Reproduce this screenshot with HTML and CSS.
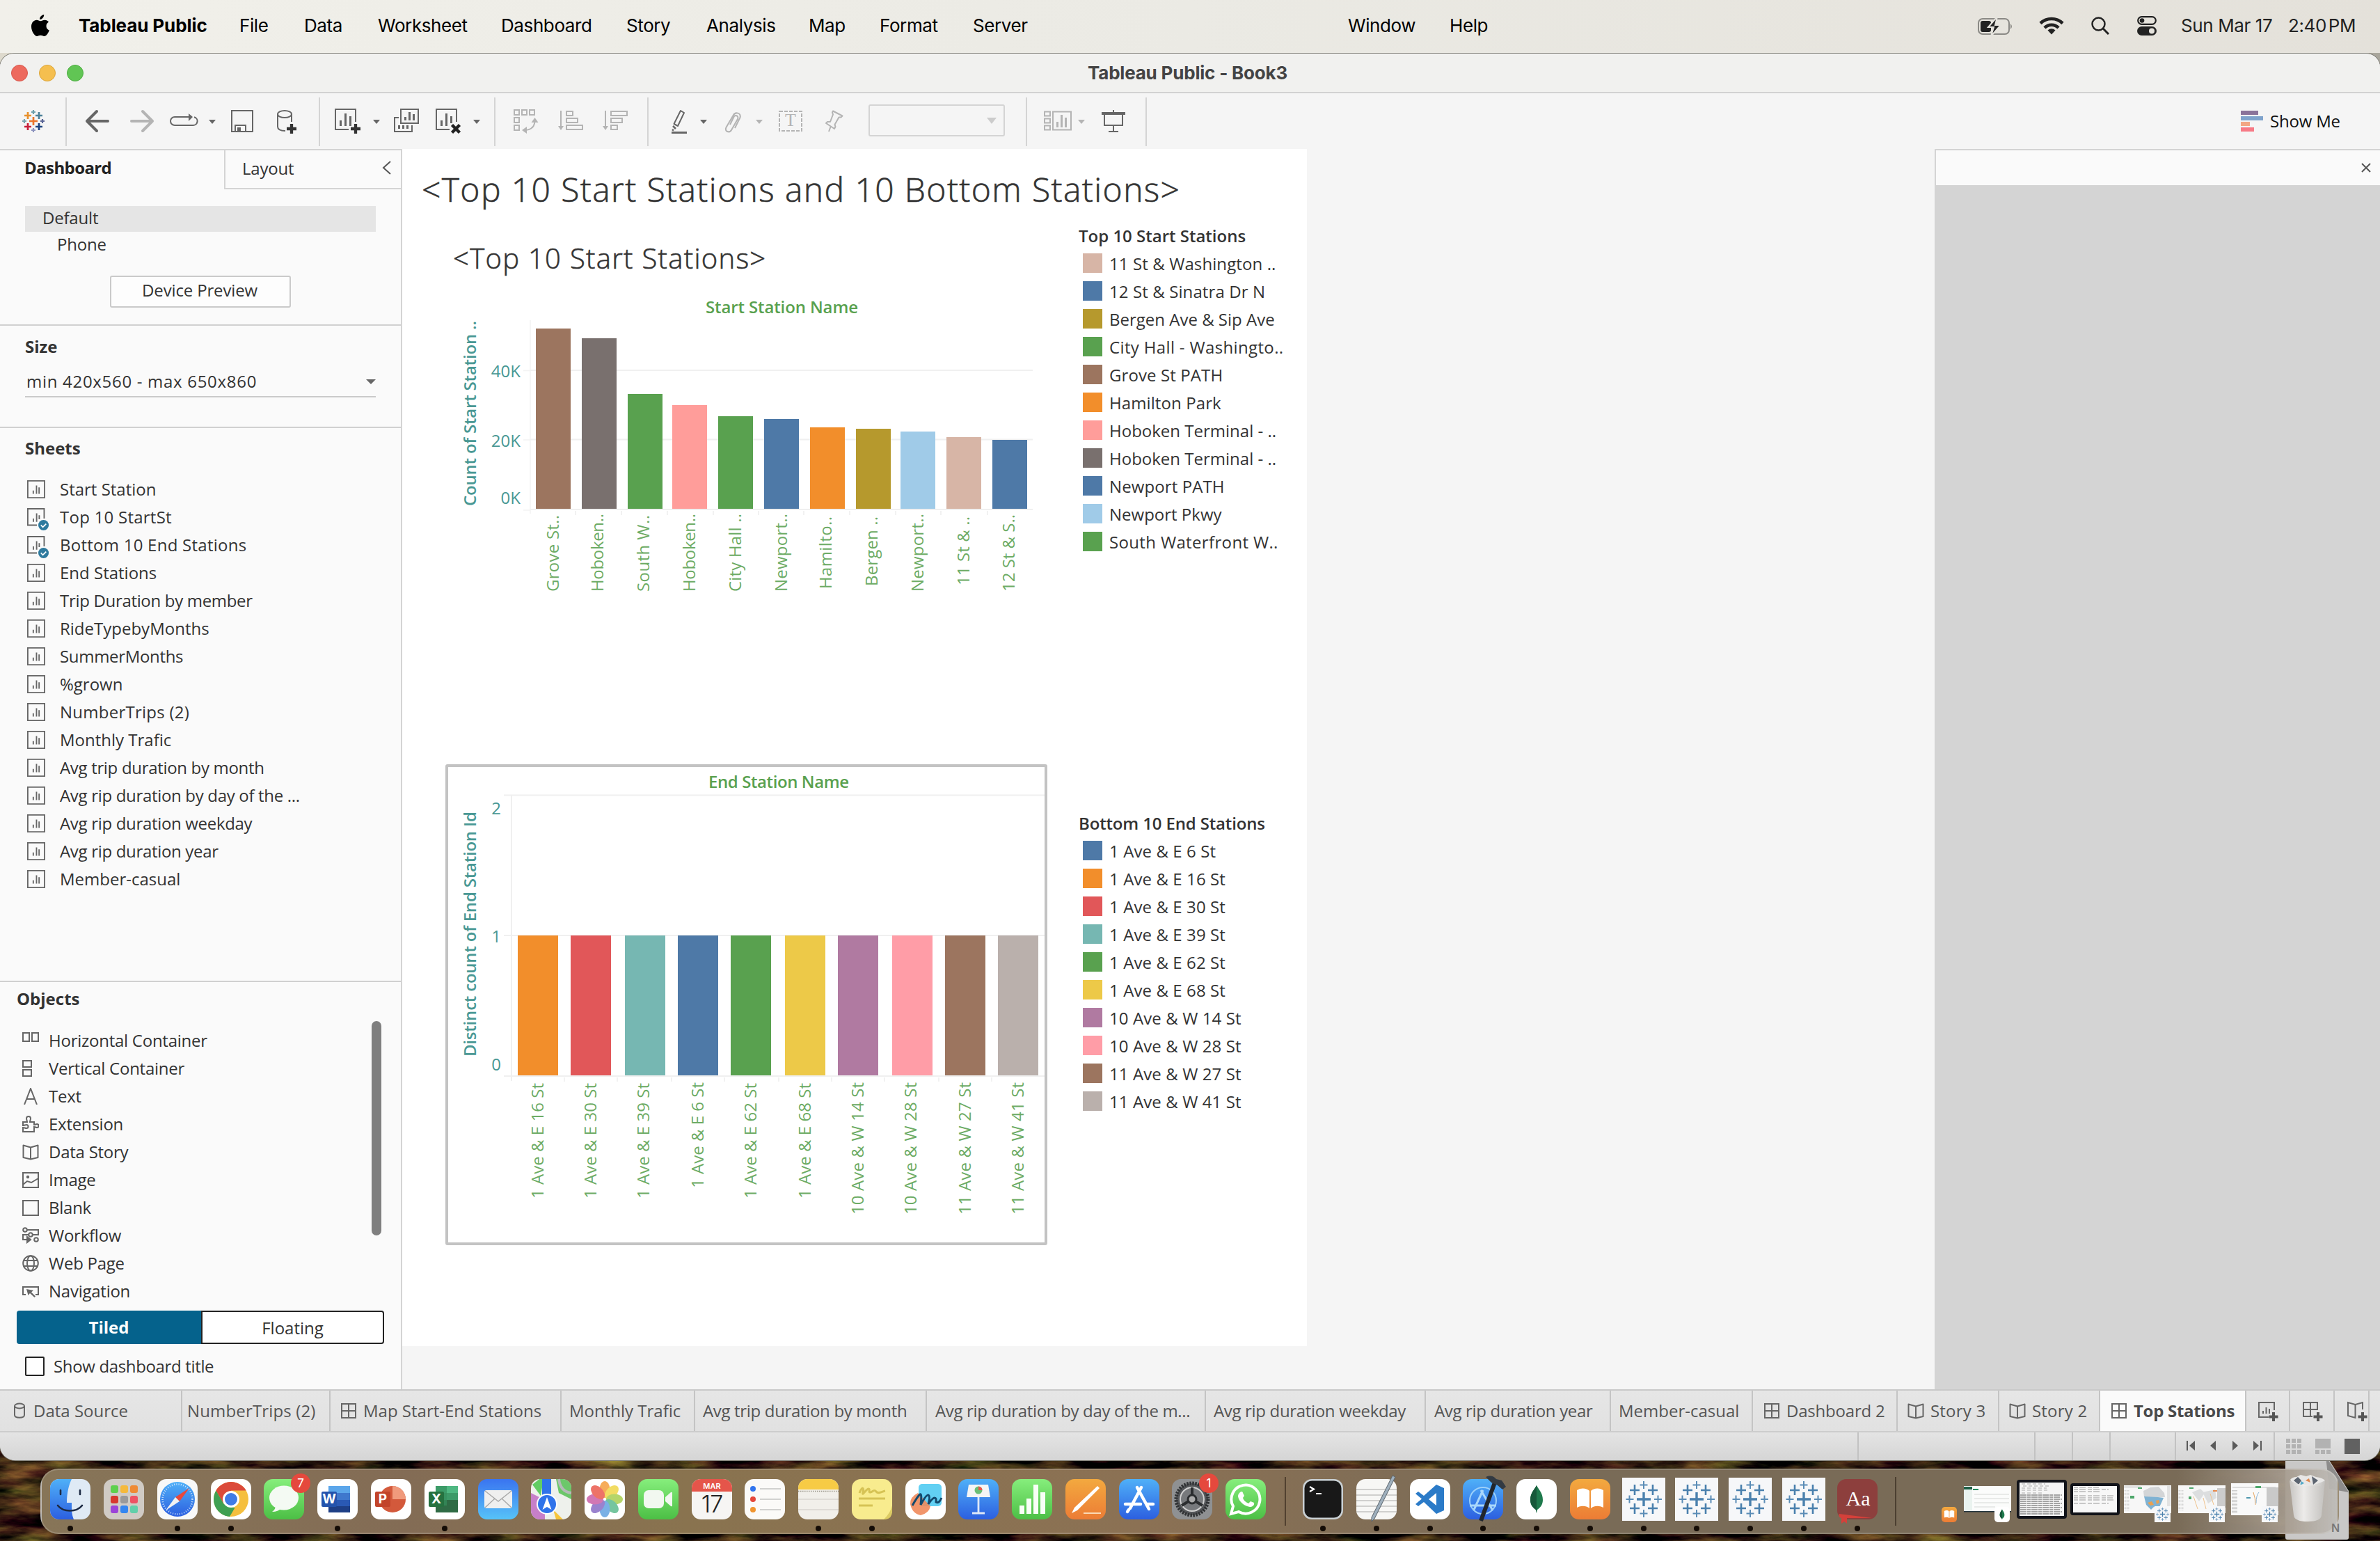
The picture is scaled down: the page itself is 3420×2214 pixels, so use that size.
FILE: index.html
```html
<!DOCTYPE html>
<html lang="en">
<head>
<meta charset="utf-8">
<title>Tableau Public - Book3</title>
<link rel="stylesheet" href="styles.css">
</head>
<body>
<svg class="defs" width="0" height="0" aria-hidden="true">
  <defs>
    <linearGradient id="g-blue" x1="0" y1="0" x2="0" y2="1"><stop offset="0" stop-color="#4fb0f8"/><stop offset="1" stop-color="#2c5fe0"/></linearGradient>
    <linearGradient id="g-mail" x1="0" y1="0" x2="0" y2="1"><stop offset="0" stop-color="#3a74f0"/><stop offset="1" stop-color="#57c3f8"/></linearGradient>
    <linearGradient id="g-green" x1="0" y1="0" x2="0" y2="1"><stop offset="0" stop-color="#86ee7c"/><stop offset="1" stop-color="#4cbf45"/></linearGradient>
    <linearGradient id="g-orange" x1="0" y1="0" x2="0" y2="1"><stop offset="0" stop-color="#f3a93f"/><stop offset="1" stop-color="#ec7c35"/></linearGradient>
    <linearGradient id="g-trash" x1="0" y1="0" x2="1" y2="0"><stop offset="0" stop-color="#c9c7c5"/><stop offset=".4" stop-color="#f1f0ef"/><stop offset="1" stop-color="#c3c1be"/></linearGradient>
    <symbol id="sheet" viewBox="0 0 28 28"><path d="M1 1h26v26H1z" fill="none" stroke="#666" stroke-width="2"/><path d="M9.500 16v5M14.500 8v13M18.500 11v10" stroke="#666" stroke-width="2" fill="none"/></symbol>
    <symbol id="sheet-used" viewBox="0 0 34 34"><path d="M26 16V1H1v25h14" fill="none" stroke="#666" stroke-width="2"/><path d="M9.500 16v5M14.500 8v13M18.500 11v6" stroke="#666" stroke-width="2" fill="none"/><circle cx="25" cy="26" r="8" fill="#2e7a9e"/><path d="M21 26l3 3 5-5" stroke="#fff" stroke-width="1.800" fill="none"/></symbol>
    <symbol id="dash" viewBox="0 0 24 24"><path d="M2 2h20v20H2zM12 2v20M2 12h20" fill="none" stroke="#666" stroke-width="2"/></symbol>
    <symbol id="story" viewBox="0 0 24 24"><path d="M12 5.500v17M12 22.500L1.500 20V2.500L12 5.500l10.500-3V20z" fill="none" stroke="#666" stroke-width="2" stroke-linejoin="round"/></symbol>
    <symbol id="tb" viewBox="0 0 62 62"><path d="M0 0h62v62H0z" fill="#f6f7f9"/><path d="M31 21v20M21 31h20" stroke="#4a80ad" stroke-width="3.400"/><path d="M18 10v15M11 18h14M44 10v15M37 18h14M18 37v15M11 44h14M44 37v15M37 44h14" stroke="#4a80ad" stroke-width="2.600"/><path d="M31 5v11M25.500 10.500h11M31 46v11M25.500 51.500h11M10.500 25.500v11M5.500 31h11M51.500 25.500v11M46 31h11" stroke="#5a8cb6" stroke-width="2"/></symbol>
    <symbol id="mongo" viewBox="0 0 58 58"><rect width="58" height="58" rx="13" fill="#fff"/><path d="M29 9c3 6 9 11 9 21 0 8-5 12-8 14l-1 5-1-5c-3-2-8-6-8-14 0-10 6-15 9-21z" fill="#1f7a4d"/><path d="M29 9v40l-1-5c-3-2-8-6-8-14 0-10 6-15 9-21z" fill="#17583a"/></symbol>
    <symbol id="books" viewBox="0 0 58 58"><rect width="58" height="58" rx="13" fill="url(#g-orange)"/><path d="M28 17c-4-4-12-5-18-1v25c6-3 13-3 18 1zM30 17c4-4 12-5 18-1v25c-6-3-13-3-18 1z" fill="#fff"/></symbol>
    <filter id="soil" x="0" y="0" width="100%" height="100%" color-interpolation-filters="sRGB">
      <feTurbulence type="fractalNoise" baseFrequency="0.012 0.05" numOctaves="5" seed="7"/>
      <feColorMatrix values="1.100 0 0 0 -.35  .9 .25 0 0 -.45  .35 0 0 0 -.11  0 0 0 0 1"/>
    </filter>
  </defs>
</svg>

<div class="desktop">
<header class="menubar">
  <svg class="apple" viewBox="0 0 26 31" width="26" height="31"><path d="M18.200 0c.3 3.500-2.800 7-6.100 7C11.800 3.600 15 .3 18.200 0zM25 10.600c-2.200 1.400-3.500 3.200-3.500 5.800 0 3 1.700 5 4.300 6C24.500 26.500 21.500 31 18.500 31c-2 0-2.700-1.200-5.200-1.200S10 31 8.200 31C4.600 31 0 23.500 0 17.200 0 11.200 3.800 7.800 7.600 7.800c2.300 0 4 1.500 5.700 1.500 1.500 0 3.400-1.600 6.200-1.600 2 0 4.200 1 5.500 2.900z"/></svg>
  <nav class="menus">
    <b class="m1">Tableau Public</b><span class="m2">File</span><span class="m3">Data</span><span class="m4">Worksheet</span><span class="m5">Dashboard</span><span class="m6">Story</span><span class="m7">Analysis</span><span class="m8">Map</span><span class="m9">Format</span><span class="m10">Server</span><span class="m11">Window</span><span class="m12">Help</span>
  </nav>
  <div class="extras">
    <svg viewBox="2842 20 54 34" width="54" height="34"><rect x="2843" y="27" width="44" height="22" rx="6" fill="none" stroke="#8a8985" stroke-width="2"/><path d="M2889 34q4 4 0 8z" fill="#8a8985"/><rect x="2846" y="30" width="15" height="16" rx="3" fill="#222"/><path d="M2870 24l-13 15h8l-4 13 14-16h-8z" fill="#222" stroke="#e5e3dd" stroke-width="2"/></svg>
    <svg class="wifi" viewBox="0 0 36 26" width="36" height="26"><path d="M2 9.500a23 23 0 0 1 32 0M8 16a14 14 0 0 1 20 0" fill="none" stroke="#222" stroke-width="4.600"/><path d="M18 25.500l-5.500-6a8 8 0 0 1 11 0z" fill="#222"/></svg>
    <svg class="search" viewBox="0 0 26 26" width="26" height="26"><circle cx="10.500" cy="10.500" r="9" fill="none" stroke="#222" stroke-width="2.500"/><path d="M17 17l8 8" stroke="#222" stroke-width="3"/></svg>
    <svg class="control" viewBox="0 0 28 28" width="28" height="28"><rect x="1.200" y="1.200" width="25.600" height="10.600" rx="5.300" fill="none" stroke="#222" stroke-width="2.200"/><circle cx="7" cy="6.500" r="3.300" fill="#222"/><rect y="15" width="28" height="13" rx="6.500" fill="#222"/><circle cx="21" cy="21.500" r="4" fill="#e5e3dd"/></svg>
    <span class="date">Sun Mar 17</span><span class="time">2:40 PM</span>
  </div>
</header>

<main class="window">
  <div class="titlebar">
    <span class="light red"></span><span class="light yellow"></span><span class="light green"></span>
    <h1>Tableau Public - Book3</h1>
  </div>

  <div class="toolbar">
    <div class="tg g1">
      <svg viewBox="0 136 94 78" width="94" height="78" fill="none" stroke-width="2.700"><path d="M48 168v12M42 174h12" stroke="#eb762b"/><path d="M40 161v10M35 166h10" stroke="#e8912d"/><path d="M56 161v10M51 166h10" stroke="#4d8199"/><path d="M40 177v10M35 182h10" stroke="#c8203a"/><path d="M56 177v10M51 182h10" stroke="#1f447e"/><g stroke-width="2.200"><path d="M48 158v6M45 161h6" stroke="#6fa0ab"/><path d="M48 184v6M45 187h6" stroke="#8d94bf"/><path d="M35 171v6M32 174h6" stroke="#7ba6b0"/><path d="M61 171v6M58 174h6" stroke="#5b6697"/></g></svg>
    </div>
    <div class="tg g2">
      <svg viewBox="96 136 76 78" width="76" height="78"><path d="M155 174h-29M139 160l-14 14 14 14" fill="none" stroke="#666" stroke-width="4" stroke-linecap="round" stroke-linejoin="round"/></svg>
      <svg viewBox="172 136 62 78" width="62" height="78"><path d="M189 174h29M205 160l14 14-14 14" fill="none" stroke="#b4b4b4" stroke-width="4" stroke-linecap="round" stroke-linejoin="round"/></svg>
      <svg viewBox="234 136 86 78" width="86" height="78"><path d="M272 168h-21a6 6 0 0 0 0 12h26a6 6 0 0 0 2-11.800" fill="none" stroke="#666" stroke-width="2"/><path d="M271 163l6 5-6 6zM300 172h10l-5 6z" fill="#666"/></svg>
      <svg viewBox="320 136 60 78" width="60" height="78"><path d="M333 159h30v30h-30zM338 189v-9h15v9" fill="none" stroke="#666" stroke-width="2"/><path d="M341 183h5v6h-5z" fill="#666"/></svg>
      <svg viewBox="380 136 78 78" width="78" height="78"><g fill="none" stroke="#666" stroke-width="2"><ellipse cx="409" cy="164" rx="10" ry="5"/><path d="M399 164v18c0 4 4 6 11 6M419 164v11"/></g><path d="M419 178v14M412 185h14" stroke="#333" stroke-width="4.300"/></svg>
    </div>
    <div class="tg g3">
      <svg viewBox="460 136 102 78" width="102" height="78"><path d="M511 175v-18h-29v29h19" fill="none" stroke="#666" stroke-width="2"/><path d="M489.500 173v8M496.500 163v18M503.500 167v14" stroke="#666" stroke-width="3"/><path d="M511 178v14M504 185h14" stroke="#333" stroke-width="4.300"/><path d="M536 172h10l-5 6z" fill="#666"/></svg>
      <svg viewBox="562 136 50 78" width="50" height="78"><path d="M576 157h25v20h-25zM573 169h-6v20h25v-9" fill="none" stroke="#666" stroke-width="2"/><path d="M582.500 168v5M588.500 161v12M594.500 164v9M573.500 180v5M579.500 180v5M585.500 180v5" stroke="#666" stroke-width="3"/></svg>
      <svg viewBox="612 136 98 78" width="98" height="78"><path d="M656 175v-18h-29v29h19" fill="none" stroke="#666" stroke-width="2"/><path d="M634.500 173v8M641.500 163v18M648.500 167v10" stroke="#666" stroke-width="3"/><path d="M649.500 179.500l11 11M660.500 179.500l-11 11" stroke="#222" stroke-width="4.500"/><path d="M680 172h10l-5 6z" fill="#666"/></svg>
    </div>
    <div class="tg g4">
      <svg viewBox="712 136 76 78" width="76" height="78"><g fill="none" stroke="#b4b4b4" stroke-width="2"><path d="M739 158h7v7h-7zM750 158h7v7h-7zM761 158h7v7h-7zM739 169h7v7h-7zM739 180h7v7h-7z"/><path d="M755 187q13-1 13.500-13"/></g><path d="M750 187l7-5v10zM768.500 169l-5 7h10z" fill="#b4b4b4"/></svg>
      <svg viewBox="788 136 64 78" width="64" height="78"><path d="M806 159v24M814 160h9v6h-9zM814 170h16v6h-16zM814 180h23v6h-23z" fill="none" stroke="#b4b4b4" stroke-width="2"/><path d="M802 181h8l-4 6z" fill="#b4b4b4"/></svg>
      <svg viewBox="852 136 78 78" width="78" height="78"><path d="M870 159v24M878 160h23v6h-23zM878 170h16v6h-16zM878 180h9v6h-9z" fill="none" stroke="#b4b4b4" stroke-width="2"/><path d="M866 181h8l-4 6z" fill="#b4b4b4"/></svg>
    </div>
    <div class="tg g5">
      <svg viewBox="932 136 98 78" width="98" height="78"><path d="M978 159l5 3-9 19-5.500-3z" fill="none" stroke="#666" stroke-width="2" stroke-linejoin="round"/><path d="M967 181l4 4M966 186l2 1.500" stroke="#666" stroke-width="2.500"/><path d="M965 189h22v3h-22zM1006 172h10l-5 6z" fill="#666"/></svg>
      <svg viewBox="1030 136 74 78" width="74" height="78"><path d="M1056 184l7.500-15c2-7-7-9-10-3l-10 17c-3 6 5 9 8 3l8.500-15c2-5-4-7-6-2l-5 10" fill="none" stroke="#b4b4b4" stroke-width="2"/><path d="M1086 172h10l-5 6z" fill="#b4b4b4"/></svg>
      <svg viewBox="1104 136 64 78" width="64" height="78"><rect x="1120" y="160" width="32" height="28" fill="none" stroke="#b4b4b4" stroke-width="2" stroke-dasharray="5 2"/><text x="1136" y="181" class="tbox">T</text></svg>
      <svg viewBox="1168 136 80 78" width="80" height="78"><path d="M1197 159.500l13.500 7-2 2h-3l-6 10.500 1 3-1.500 3-12-8 2-2 4 0 4-10.500-1-3zM1194 181l-3 8" fill="none" stroke="#b4b4b4" stroke-width="2" stroke-linejoin="round"/></svg>
      <div class="combo"><i></i></div>
    </div>
    <div class="tg g6">
      <svg viewBox="1476 136 92 78" width="92" height="78"><path d="M1501 160.500h8v6h-8zM1501 170.500h8v6h-8zM1501 180.500h8v6h-8zM1513 160.500h26v26h-26z" fill="none" stroke="#b4b4b4" stroke-width="2"/><path d="M1519.500 175v8M1525.500 165v18M1531.500 169v14" stroke="#b4b4b4" stroke-width="3"/><path d="M1549 172h10l-5 6z" fill="#b4b4b4"/></svg>
      <svg viewBox="1568 136 78 78" width="78" height="78"><path d="M1583 161h34v4h-34zM1599 158h2v4h-2z" fill="#666"/><path d="M1587 165v15h26v-15M1600 180v8M1593 189h14" fill="none" stroke="#666" stroke-width="2"/></svg>
    </div>
    <div class="showme">
      <svg viewBox="0 0 32 30" width="32" height="30"><path d="M0 0h25v6H0z" fill="#8a739a"/><path d="M0 8h32v6H0z" fill="#7fa3cc"/><path d="M0 16h13v6H0z" fill="#f2a784"/><path d="M0 24h19v6H0z" fill="#f77a86"/></svg>
      <span>Show Me</span>
    </div>
  </div>

  <div class="workspace">
    <aside class="side">
      <div class="side-tabs"><b>Dashboard</b><div class="tab-layout"><span>Layout</span><svg viewBox="0 0 13 20" width="13" height="20"><path d="M12 1L2 10l10 9" fill="none" stroke="#555" stroke-width="2"/></svg></div></div>
      <section class="device">
        <div class="dev sel">Default</div>
        <div class="dev phone">Phone</div>
        <button class="preview">Device Preview</button>
      </section>
      <section class="size">
        <h2>Size</h2>
        <div class="select"><span>min 420x560 - max 650x860</span><i></i></div>
      </section>
      <section class="sheets">
        <h2>Sheets</h2>
        <ul>
          <li><svg class="si"><use href="#sheet"/></svg>Start Station</li>
          <li class="num"><svg class="si used"><use href="#sheet-used"/></svg>Top 10 StartSt</li>
          <li class="num"><svg class="si used"><use href="#sheet-used"/></svg>Bottom 10 End Stations</li>
          <li><svg class="si"><use href="#sheet"/></svg>End Stations</li>
          <li class="tight"><svg class="si"><use href="#sheet"/></svg>Trip Duration by member</li>
          <li><svg class="si"><use href="#sheet"/></svg>RideTypebyMonths</li>
          <li class="tight"><svg class="si"><use href="#sheet"/></svg>SummerMonths</li>
          <li><svg class="si"><use href="#sheet"/></svg>%grown</li>
          <li class="num"><svg class="si"><use href="#sheet"/></svg>NumberTrips (2)</li>
          <li><svg class="si"><use href="#sheet"/></svg>Monthly Trafic</li>
          <li class="tight"><svg class="si"><use href="#sheet"/></svg>Avg trip duration by month</li>
          <li class="tight"><svg class="si"><use href="#sheet"/></svg>Avg rip duration by day of the ...</li>
          <li class="tight"><svg class="si"><use href="#sheet"/></svg>Avg rip duration weekday</li>
          <li class="tight"><svg class="si"><use href="#sheet"/></svg>Avg rip duration year</li>
          <li><svg class="si"><use href="#sheet"/></svg>Member-casual</li>
        </ul>
      </section>
      <section class="objects">
        <h2>Objects</h2>
        <div class="obj-body">
          <ul>
            <li><svg viewBox="0 0 24 24"><path d="M1 1h9v12H1zM14 1h9v12h-9z"/></svg>Horizontal Container</li>
            <li><svg viewBox="0 0 24 24"><path d="M1 1h12v9H1zM1 14h12v9H1z"/></svg>Vertical Container</li>
            <li><svg viewBox="0 0 24 24"><path d="M3 24L12 1l9 23M6.500 16h11"/></svg>Text</li>
            <li><svg viewBox="0 0 24 24"><path d="M1 9h6c0-2-1-3-1-5a3 3 0 0 1 6 0c0 2-1 3-1 5h6v4c2 0 2-1 4-1a2.500 2.500 0 0 1 0 5c-2 0-2-1-4-1v7H1v-6c2 0 3 1 5 1a2.500 2.500 0 0 0 0-5c-2 0-3 1-5 1z"/></svg>Extension</li>
            <li><svg><use href="#story"/></svg>Data Story</li>
            <li><svg viewBox="0 0 24 24"><path d="M1 2h22v21H1zM1 19l6-5 6 2 10-6"/><circle cx="8" cy="8" r="2.200" fill="#666" stroke="none"/></svg>Image</li>
            <li><svg viewBox="0 0 24 24"><path d="M1 2h22v21H1z"/></svg>Blank</li>
            <li><svg viewBox="0 0 24 24"><circle cx="4" cy="4" r="2.800"/><path d="M7 4h16v7h-8M9 11H1v7h6"/><circle cx="12" cy="11" r="2.800"/><circle cx="20" cy="18" r="2.800"/><path d="M7 14l5 4-5 4z" fill="#666"/></svg>Workflow</li>
            <li><svg viewBox="0 0 24 24"><circle cx="12" cy="12" r="10.800"/><ellipse cx="12" cy="12" rx="5" ry="10.800"/><path d="M2.500 8h19M2.500 16h19"/></svg>Web Page</li>
            <li><svg viewBox="0 0 24 24"><path d="M5 17H1V6h22v11h-4"/><path d="M6 9l10 2-3 2.500 6 6-1.500 1.500-6.500-6-2.500 3z" fill="#666" stroke="none"/></svg>Navigation</li>
          </ul>
          <div class="scroll"></div>
        </div>
        <div class="toggle"><b>Tiled</b><span>Floating</span></div>
        <label class="check"><i></i>Show dashboard title</label>
      </section>
    </aside>

    <div class="stage">
      <article class="canvas">
        <div class="viz">
          <h2 class="viz-title">&lt;Top 10 Start Stations and 10 Bottom Stations&gt;</h2>
          <h3 class="viz-sub">&lt;Top 10 Start Stations&gt;</h3>
          <svg class="chart1" viewBox="640 410 868 470" width="868" height="470">
            <text x="1123.500" y="450" class="head" textLength="219">Start Station Name</text>
            <text transform="translate(684 727) rotate(-90)" class="ytitle" textLength="266">Count of Start Station ..</text>
            <g class="ticks"><text x="748" y="542">40K</text><text x="748" y="642">20K</text><text x="748" y="723.500">0K</text></g>
            <path d="M762 460v278M752 532.500h10M752 632h10M752 733h10" stroke="#f3f3f3" stroke-width="1.500"/>
            <path d="M762 532h722M762 631.500h722M762 732h722" stroke="#f0f0f0" stroke-width="2"/>
            <path d="M827 734v6M893 734v6M959 734v6M1025 734v6M1090 734v6M1155 734v6M1221 734v6M1287 734v6M1352 734v6M1419 734v6" stroke="#eee" stroke-width="1.500"/>
            <rect x="770" y="472" width="50" height="259" fill="#9c755f"/>
            <rect x="836" y="486" width="50" height="245" fill="#79706e"/>
            <rect x="902" y="566" width="50" height="165" fill="#59a14f"/>
            <rect x="966" y="582" width="50" height="149" fill="#ff9d9a"/>
            <rect x="1032" y="598" width="50" height="133" fill="#59a14f"/>
            <rect x="1098" y="602" width="50" height="129" fill="#4e79a7"/>
            <rect x="1164" y="614" width="50" height="117" fill="#f28e2b"/>
            <rect x="1230" y="616" width="50" height="115" fill="#b6992d"/>
            <rect x="1294" y="620" width="50" height="111" fill="#a0cbe8"/>
            <rect x="1360" y="628" width="50" height="103" fill="#d7b5a6"/>
            <rect x="1426" y="632" width="50" height="99" fill="#4e79a7"/>
            <g class="xl">
              <text transform="translate(803 850) rotate(-90)" textLength="110">Grove St..</text>
              <text transform="translate(867 850) rotate(-90)" textLength="112">Hoboken..</text>
              <text transform="translate(933 850) rotate(-90)" textLength="110">South W..</text>
              <text transform="translate(999 850) rotate(-90)" textLength="112">Hoboken..</text>
              <text transform="translate(1065 850) rotate(-90)" textLength="112">City Hall ..</text>
              <text transform="translate(1131 850) rotate(-90)" textLength="112">Newport..</text>
              <text transform="translate(1195 846) rotate(-90)" textLength="104">Hamilto..</text>
              <text transform="translate(1261 842) rotate(-90)" textLength="100">Bergen ..</text>
              <text transform="translate(1327 850) rotate(-90)" textLength="112">Newport..</text>
              <text transform="translate(1393 841) rotate(-90)" textLength="99">11 St &amp; ..</text>
              <text transform="translate(1458 850) rotate(-90)" textLength="111">12 St &amp; S..</text>
            </g>
          </svg>
          <div class="selected">
            <svg viewBox="644 1102 857 683" width="857" height="683">
              <text x="1119" y="1132" class="head" textLength="202">End Station Name</text>
              <text transform="translate(684 1518) rotate(-90)" class="ytitle" textLength="352">Distinct count of End Station Id</text>
              <g class="ticks"><text x="720" y="1170">2</text><text x="720" y="1354">1</text><text x="720" y="1538">0</text></g>
              <path d="M735 1142v411M724 1142.500h777M724 1344h777M724 1546h777" stroke="#f0f0f0" stroke-width="2" fill="none"/>
              <path d="M811 1548v6M887 1548v6M965 1548v6M1041 1548v6M1119 1548v6M1195 1548v6M1271 1548v6M1349 1548v6M1425 1548v6" stroke="#eee" stroke-width="1.500"/>
              <rect x="744" y="1344" width="58" height="201" fill="#f28e2b"/>
              <rect x="820" y="1344" width="58" height="201" fill="#e15759"/>
              <rect x="898" y="1344" width="58" height="201" fill="#76b7b2"/>
              <rect x="974" y="1344" width="58" height="201" fill="#4e79a7"/>
              <rect x="1050" y="1344" width="58" height="201" fill="#59a14f"/>
              <rect x="1128" y="1344" width="58" height="201" fill="#edc948"/>
              <rect x="1204" y="1344" width="58" height="201" fill="#b07aa1"/>
              <rect x="1282" y="1344" width="58" height="201" fill="#ff9da7"/>
              <rect x="1358" y="1344" width="58" height="201" fill="#9c755f"/>
              <rect x="1434" y="1344" width="58" height="201" fill="#bab0ac"/>
              <g class="xl">
                <text transform="translate(781 1722) rotate(-90)" textLength="166">1 Ave &amp; E 16 St</text>
                <text transform="translate(857 1722) rotate(-90)" textLength="166">1 Ave &amp; E 30 St</text>
                <text transform="translate(933 1722) rotate(-90)" textLength="166">1 Ave &amp; E 39 St</text>
                <text transform="translate(1011 1707) rotate(-90)" textLength="152">1 Ave &amp; E 6 St</text>
                <text transform="translate(1087 1722) rotate(-90)" textLength="166">1 Ave &amp; E 62 St</text>
                <text transform="translate(1165 1722) rotate(-90)" textLength="166">1 Ave &amp; E 68 St</text>
                <text transform="translate(1241 1745) rotate(-90)" textLength="190">10 Ave &amp; W 14 St</text>
                <text transform="translate(1317 1745) rotate(-90)" textLength="190">10 Ave &amp; W 28 St</text>
                <text transform="translate(1395 1745) rotate(-90)" textLength="190">11 Ave &amp; W 27 St</text>
                <text transform="translate(1471 1745) rotate(-90)" textLength="190">11 Ave &amp; W 41 St</text>
              </g>
            </svg>
          </div>
        </div>
        <div class="legends">
          <section class="legend l1">
            <h4>Top 10 Start Stations</h4>
            <ul>
              <li><i class="tan"></i>11 St &amp; Washington ..</li>
              <li><i class="blue"></i>12 St &amp; Sinatra Dr N</li>
              <li class="even"><i class="olive"></i>Bergen Ave &amp; Sip Ave</li>
              <li class="wide"><i class="grn"></i>City Hall - Washingto..</li>
              <li><i class="brown"></i>Grove St PATH</li>
              <li><i class="orange"></i>Hamilton Park</li>
              <li class="even"><i class="salmon"></i>Hoboken Terminal - ..</li>
              <li class="even"><i class="gray"></i>Hoboken Terminal - ..</li>
              <li><i class="blue"></i>Newport PATH</li>
              <li class="even"><i class="sky"></i>Newport Pkwy</li>
              <li class="wide"><i class="grn"></i>South Waterfront W..</li>
            </ul>
          </section>
          <section class="legend l2">
            <h4>Bottom 10 End Stations</h4>
            <ul>
              <li><i class="blue"></i>1 Ave &amp; E 6 St</li>
              <li><i class="orange"></i>1 Ave &amp; E 16 St</li>
              <li><i class="coral"></i>1 Ave &amp; E 30 St</li>
              <li><i class="teal"></i>1 Ave &amp; E 39 St</li>
              <li><i class="grn"></i>1 Ave &amp; E 62 St</li>
              <li><i class="gold"></i>1 Ave &amp; E 68 St</li>
              <li><i class="plum"></i>10 Ave &amp; W 14 St</li>
              <li><i class="rose"></i>10 Ave &amp; W 28 St</li>
              <li><i class="brown"></i>11 Ave &amp; W 27 St</li>
              <li><i class="stone"></i>11 Ave &amp; W 41 St</li>
            </ul>
          </section>
        </div>
      </article>
    </div>

    <aside class="showpanel">
      <div class="sp-head"><svg viewBox="0 0 14 14" width="14" height="14"><path d="M1 1l12 12M13 1L1 13" stroke="#555" stroke-width="2"/></svg></div>
    </aside>
  </div>

  <div class="tabs">
    <span class="t1"><svg viewBox="0 0 18 24" width="18" height="24"><path d="M2 5v13c0 5 14 5 14 0V5" fill="none" stroke="#666" stroke-width="2"/><ellipse cx="9" cy="5" rx="7" ry="3.500" fill="none" stroke="#666" stroke-width="2"/></svg>Data Source</span>
    <span class="t2">NumberTrips (2)</span>
    <span class="t3"><svg class="ti"><use href="#dash"/></svg>Map Start-End Stations</span>
    <span class="t4">Monthly Trafic</span>
    <span class="t5 tight">Avg trip duration by month</span>
    <span class="t6 tight">Avg rip duration by day of the m...</span>
    <span class="t7 tight">Avg rip duration weekday</span>
    <span class="t8 tight">Avg rip duration year</span>
    <span class="t9">Member-casual</span>
    <span class="t10"><svg class="ti"><use href="#dash"/></svg>Dashboard 2</span>
    <span class="t11"><svg class="ti"><use href="#story"/></svg>Story 3</span>
    <span class="t12"><svg class="ti"><use href="#story"/></svg>Story 2</span>
    <span class="t13 on"><svg class="ti"><use href="#dash"/></svg>Top Stations</span>
    <span class="t14"><svg viewBox="0 0 32 32" width="32" height="32"><path d="M25 15V4H3v21h14" fill="none" stroke="#666" stroke-width="2"/><path d="M9 16v4M13.500 11v9M18 13v7" stroke="#666" stroke-width="2"/><path d="M24 18v13M17.500 24.500h13" stroke="#555" stroke-width="4"/></svg></span>
    <span class="t15"><svg viewBox="0 0 32 32" width="32" height="32"><path d="M23 15V4H3v20h13M13 4v20M3 14h20" fill="none" stroke="#666" stroke-width="2"/><path d="M24 18v13M17.500 24.500h13" stroke="#555" stroke-width="4"/></svg></span>
    <span class="t16"><svg viewBox="0 0 32 32" width="32" height="32"><path d="M24 14V4L13.500 7 3 4v19l10.500 3V7" fill="none" stroke="#666" stroke-width="2"/><path d="M24 18v13M17.500 24.500h13" stroke="#555" stroke-width="4"/></svg></span>
  </div>
  <div class="status">
    <i class="s0"></i><i class="s1"></i><i class="s2"></i><i class="s3"></i><i class="s4"></i>
    <div class="nav"><svg viewBox="3127 2058 140 40" width="140" height="40" fill="#5a5a5a"><path d="M3142 2070h2v14h-2zM3154 2070v14l-8-7zM3184 2070v14l-8-7zM3208 2070v14l8-7zM3238 2070v14l8-7zM3248 2070h2v14h-2z"/></svg></div>
    <svg viewBox="3269 2058 151 40" width="151" height="40"><path d="M3285 2067h6v6h-6zM3293 2067h6v6h-6zM3301 2067h6v6h-6zM3285 2075h6v6h-6zM3293 2075h6v6h-6zM3301 2075h6v6h-6zM3285 2083h6v6h-6zM3293 2083h6v6h-6zM3301 2083h6v6h-6zM3327 2067h22v14h-22zM3327 2083h6v6h-6zM3335 2083h6v6h-6zM3343 2083h6v6h-6z" fill="#b2b2b2"/><path d="M3369 2067h22v22h-22z" fill="#616161"/></svg>
  </div>
</main>

<footer class="ground">
  <svg class="soil" width="3420" height="140"><rect width="3420" height="140" filter="url(#soil)"/></svg>
  <svg class="file" viewBox="3284 2090 92 124" width="92" height="124"><path d="M3284 2090h58l33 52v67q0 3-3 3h-85q-3 0-3-3z" fill="#c9c8c7"/><path d="M3342 2092l33 52-28-5z" fill="#8d8c8b"/></svg>
  <div class="dock">
    <div class="slot run"><svg viewBox="0 0 58 58"><rect width="58" height="58" rx="13" fill="#dfeaf5"/><path d="M31 0H13A13 13 0 0 0 0 13v32a13 13 0 0 0 13 13h21c-3-7-3-14-3-24h-7C24 20 27 8 31 0z" fill="url(#g-blue)"/><path d="M15 16v6M43 16v6M11 38c8 10 27 10 35 0" fill="none" stroke="#1c2a44" stroke-width="2.600" stroke-linecap="round"/></svg></div>
    <div class="slot"><svg viewBox="0 0 58 58"><rect width="58" height="58" rx="13" fill="#d0cbc5"/><g><rect x="10" y="9" width="11" height="11" rx="3" fill="#5ed04e"/><rect x="24" y="9" width="11" height="11" rx="3" fill="#f5b93c"/><rect x="38" y="9" width="11" height="11" rx="3" fill="#ef8a34"/><rect x="10" y="24" width="11" height="11" rx="3" fill="#d8372f"/><rect x="24" y="24" width="11" height="11" rx="3" fill="#9a9a9a"/><rect x="38" y="24" width="11" height="11" rx="3" fill="#ef5264"/><rect x="10" y="38" width="11" height="11" rx="3" fill="#9c44d8"/><rect x="24" y="38" width="11" height="11" rx="3" fill="#3586f0"/><rect x="38" y="38" width="11" height="11" rx="3" fill="#62cfaa"/></g></svg></div>
    <div class="slot run"><svg viewBox="0 0 58 58"><rect width="58" height="58" rx="13" fill="#f8f8f8"/><circle cx="29" cy="29" r="25" fill="url(#g-blue)"/><circle cx="29" cy="29" r="21.500" fill="none" stroke="#cfe4fb" stroke-width="2.500" stroke-dasharray="1 2.300"/><path d="M46 13L32 32l-6-6z" fill="#e8483c"/><path d="M12 45l14-19 6 6z" fill="#f2f2f2"/></svg></div>
    <div class="slot run"><svg viewBox="0 0 58 58"><rect width="58" height="58" rx="13" fill="#fff"/><circle cx="29" cy="29" r="25" fill="#f5bf3e"/><path d="M7.400 16.500A25 25 0 0 1 50.600 16.500H29L18 35z" fill="#db4a3a"/><path d="M7.400 16.500l11 19 16 6L27 54A25 25 0 0 1 7.400 16.500z" fill="#3fa052"/><circle cx="29" cy="29" r="12" fill="#fff"/><circle cx="29" cy="29" r="9" fill="#3f7be6"/></svg></div>
    <div class="slot"><svg viewBox="0 0 58 58"><rect width="58" height="58" rx="13" fill="url(#g-green)"/><ellipse cx="29" cy="27" rx="21" ry="17.500" fill="#f4faf3"/><path d="M17 38q0 6-5 9 9 0 13-5z" fill="#f4faf3"/></svg><em class="badge">7</em></div>
    <div class="slot run"><svg viewBox="0 0 58 58"><rect width="58" height="58" rx="13" fill="#fff"/><path d="M16 10h31v10H16z" fill="#5ba6ea"/><path d="M16 20h31v10H16z" fill="#3f78cd"/><path d="M16 30h31v9H16z" fill="#2a59b4"/><path d="M16 39h31v9H16z" fill="#1e3f86"/><rect x="6" y="18" width="22" height="22" rx="2" fill="#2353ac"/><text x="17" y="35" class="app">W</text></svg></div>
    <div class="slot"><svg viewBox="0 0 58 58"><rect width="58" height="58" rx="13" fill="#fff"/><circle cx="31" cy="29" r="19" fill="#d3593b"/><path d="M31 10a19 19 0 0 1 19 19H31z" fill="#f09a7c"/><rect x="6" y="18" width="22" height="22" rx="2" fill="#c2442a"/><text x="17" y="35" class="app">P</text></svg></div>
    <div class="slot run"><svg viewBox="0 0 58 58"><rect width="58" height="58" rx="13" fill="#fff"/><path d="M16 10h32v10H16z" fill="#4fb882"/><path d="M16 20h32v10H16z" fill="#3d9a68"/><path d="M16 30h32v18H16z" fill="#2f6b45"/><path d="M16 10h16v28H16z" fill="#358f5d" opacity=".7"/><rect x="6" y="18" width="22" height="22" rx="2" fill="#25713f"/><text x="17" y="35" class="app">X</text></svg></div>
    <div class="slot"><svg viewBox="0 0 58 58"><rect width="58" height="58" rx="13" fill="url(#g-mail)"/><rect x="9" y="16" width="40" height="26" rx="3" fill="#efefef"/><path d="M10 17l19 15 19-15M10 41l14-13M48 41L34 28" fill="none" stroke="#aaa" stroke-width="1.500"/></svg></div>
    <div class="slot"><svg viewBox="0 0 58 58"><rect width="58" height="58" rx="13" fill="#eef1ec"/><path d="M36 0h9a13 13 0 0 1 13 13v16L40 20z" fill="#6cc76a"/><path d="M0 20l20 10v28h-7A13 13 0 0 1 0 45z" fill="#c77fc9"/><path d="M2 8l12 16 4-24h-6z" fill="#61cd63"/><path d="M36 58l-4-14 14 14z" fill="#f6c53c"/><path d="M40 0q2 18 18 20" fill="none" stroke="#b5b9b8" stroke-width="4"/><path d="M16 0h13v24H16z" fill="#2f73ea"/><circle cx="23" cy="36" r="14" fill="#2f73ea" stroke="#fff" stroke-width="2"/><path d="M23 26l6.500 18-6.500-4-6.500 4z" fill="#fff"/></svg></div>
    <div class="slot"><svg viewBox="0 0 58 58"><rect width="58" height="58" rx="13" fill="#fff"/><g opacity=".82"><ellipse cx="29" cy="15" rx="7.500" ry="12" fill="#f59b35"/><ellipse cx="29" cy="15" rx="7.500" ry="12" fill="#f0d541" transform="rotate(45 29 29)"/><ellipse cx="29" cy="15" rx="7.500" ry="12" fill="#a6cc4a" transform="rotate(90 29 29)"/><ellipse cx="29" cy="15" rx="7.500" ry="12" fill="#57b98a" transform="rotate(135 29 29)"/><ellipse cx="29" cy="15" rx="7.500" ry="12" fill="#5d9fe0" transform="rotate(180 29 29)"/><ellipse cx="29" cy="15" rx="7.500" ry="12" fill="#8467c4" transform="rotate(225 29 29)"/><ellipse cx="29" cy="15" rx="7.500" ry="12" fill="#c75aa4" transform="rotate(270 29 29)"/><ellipse cx="29" cy="15" rx="7.500" ry="12" fill="#ea5548" transform="rotate(315 29 29)"/></g></svg></div>
    <div class="slot"><svg viewBox="0 0 58 58"><rect width="58" height="58" rx="13" fill="url(#g-green)"/><rect x="8" y="16" width="29" height="26" rx="7" fill="#f2f8f0"/><path d="M39 26l8-7q2-1 2 1v18q0 2-2 1l-8-7z" fill="#f2f8f0"/></svg></div>
    <div class="slot"><svg viewBox="0 0 58 58"><rect width="58" height="58" rx="13" fill="#f6f5f3"/><path d="M0 18v-5A13 13 0 0 1 13 0h32a13 13 0 0 1 13 13v5z" fill="#e5554a"/><text x="29" y="14" class="mon">MAR</text><text x="29" y="48" class="day">17</text></svg></div>
    <div class="slot"><svg viewBox="0 0 58 58"><rect width="58" height="58" rx="13" fill="#fbfaf8"/><circle cx="12" cy="14" r="4" fill="#3275ee"/><circle cx="12" cy="29" r="4" fill="#e5483b"/><circle cx="12" cy="44" r="4" fill="#f0952f"/><path d="M22 14h30M22 29h30M22 44h30" stroke="#c4c3c1" stroke-width="1.600"/></svg></div>
    <div class="slot run"><svg viewBox="0 0 58 58"><rect width="58" height="58" rx="13" fill="#f1efea"/><path d="M0 15v-2A13 13 0 0 1 13 0h32a13 13 0 0 1 13 13v2z" fill="#f7cb45"/><path d="M0 17.500h58" stroke="#9a958a" stroke-width="1.500" stroke-dasharray="1.500 1.500"/><path d="M0 29h58M0 44h58" stroke="#d8d5cf" stroke-width="1.400"/></svg></div>
    <div class="slot run"><svg viewBox="0 0 58 58"><rect width="58" height="58" rx="13" fill="#f8ec8e"/><path d="M58 38q-2 10-12 20h2q10-1 10-12z" fill="#dccb63"/><path d="M11 20c4-10 7-8 5-1s5-5 8-5-1 6 3 5 5-5 8-1 8 0 13-1M10 28h38M10 38h20" fill="none" stroke="#d6c355" stroke-width="3"/></svg></div>
    <div class="slot"><svg viewBox="0 0 58 58"><rect width="58" height="58" rx="13" fill="#fff"/><rect x="19" y="7" width="33" height="32" rx="5" fill="#62d0f3"/><path d="M18 20q-12 6-11 16 3 14 15 16 12-3 14-13z" fill="#f08a5b" opacity=".9"/><path d="M10 38q8-14 11-16t1 15q8-15 11-14t0 13q6-9 9-9t2 6q4 3 8-6" fill="none" stroke="#134a6e" stroke-width="3"/></svg></div>
    <div class="slot"><svg viewBox="0 0 58 58"><rect width="58" height="58" rx="13" fill="url(#g-blue)"/><path d="M15 8h28l3 18H12z" fill="#f5f5f5"/><circle cx="29" cy="16" r="5.500" fill="#6bbf76"/><path d="M29 16v-5.500a5.500 5.500 0 0 1 5.500 5.500z" fill="#e9574b"/><path d="M29 26v23M20 49h18" stroke="#dfe8f8" stroke-width="2.800"/></svg></div>
    <div class="slot"><svg viewBox="0 0 58 58"><rect width="58" height="58" rx="13" fill="url(#g-green)"/><path d="M11 38h7v12h-7zM21 28h7v22h-7zM31 8h7v42h-7zM41 19h7v31h-7z" fill="#f8fff6"/></svg></div>
    <div class="slot"><svg viewBox="0 0 58 58"><rect width="58" height="58" rx="13" fill="url(#g-orange)"/><path d="M46 10l3 3-32 32-8 4 4-8z" fill="#fff"/><path d="M26 49h25" stroke="#fbd9b5" stroke-width="2"/></svg></div>
    <div class="slot"><svg viewBox="0 0 58 58"><rect width="58" height="58" rx="13" fill="url(#g-blue)"/><path d="M32 12L16 42M26 12l17 31M9 36h22M39 36h10M14 44l-2 3" stroke="#fff" stroke-width="4.500" stroke-linecap="round"/></svg></div>
    <div class="slot"><svg viewBox="0 0 58 58"><rect width="58" height="58" rx="13" fill="#8f9193"/><circle cx="29" cy="29" r="23" fill="#55575a" stroke="#303234" stroke-width="5" stroke-dasharray="2.500 1.500"/><circle cx="29" cy="29" r="17" fill="#77797c" stroke="#d0d0d0" stroke-width="2"/><path d="M29 29V12M29 29l-15 9M29 29l15 9" stroke="#2b2d2f" stroke-width="4"/><circle cx="29" cy="29" r="6" fill="#aaa" stroke="#2b2d2f" stroke-width="3"/></svg><em class="badge">1</em></div>
    <div class="slot"><svg viewBox="0 0 58 58"><rect width="58" height="58" rx="13" fill="url(#g-green)"/><path d="M8 50l3-11a20.500 20.500 0 1 1 8 8z" fill="none" stroke="#fff" stroke-width="4"/><path d="M21 19c2-2 4-1 4 1l2 4-2 3c1 4 4 6 8 8l3-3 5 2c1 4-3 6-6 6-8-1-16-8-17-15 0-3 1-4 3-6z" fill="#fff"/></svg></div>
    <i class="dsep first"></i>
    <div class="slot run"><svg viewBox="0 0 58 58"><rect width="58" height="58" rx="13" fill="#c9d0d4"/><rect x="2.500" y="2.500" width="53" height="53" rx="11" fill="#181818"/><path d="M10 11l6 3.500-6 3.500M19 21h8" stroke="#fff" stroke-width="2.200" fill="none"/></svg></div>
    <div class="slot run"><svg viewBox="0 0 58 58"><rect width="58" height="58" rx="13" fill="#f7f7f5"/><path d="M0 15h58M0 23h58M0 31h58M0 39h58M0 47h58" stroke="#c3c3c1" stroke-width="1.400"/><path d="M52-5l4 2-30 60-4 4 0-6z" fill="#9fb0bd" stroke="#59636b"/></svg></div>
    <div class="slot run"><svg viewBox="0 0 58 58"><rect width="58" height="58" rx="13" fill="#fff"/><path d="M38 8l11 5v32l-11 5-18-17-8 6-4-3 9-7.500L8 21l4-3 8 6zM38 20L27 29l11 9z" fill="#2b7bc8" fill-rule="evenodd"/></svg></div>
    <div class="slot run"><svg viewBox="0 0 58 58"><rect width="58" height="58" rx="13" fill="url(#g-blue)"/><circle cx="29" cy="31" r="19" fill="none" stroke="#9bd0fa" stroke-width="2"/><path d="M29 16L16 44M26 16l17 29M10 38h38" stroke="#a9d7fb" stroke-width="3"/><path d="M46 5L26 60" stroke="#20262e" stroke-width="6"/><path d="M33-3q9-4 15 3l8 2 6 9-5 4-7-6-9-4z" fill="#333a42"/></svg></div>
    <div class="slot run"><svg><use href="#mongo"/></svg></div>
    <div class="slot run"><svg><use href="#books"/></svg></div>
    <div class="slot run tab"><svg><use href="#tb"/></svg></div>
    <div class="slot run tab"><svg><use href="#tb"/></svg></div>
    <div class="slot run tab"><svg><use href="#tb"/></svg></div>
    <div class="slot run tab"><svg><use href="#tb"/></svg></div>
    <div class="slot run"><svg viewBox="0 0 58 58"><rect width="58" height="58" rx="13" fill="#8d3f3d"/><path d="M3 50q-2 5 3 6h44M6 56v8l4-3 4 3v-8z" fill="#d5403a"/><text x="30" y="38" class="aa">Aa</text></svg></div>
    <i class="dsep second"></i>
    <svg class="thumbs" viewBox="2743 2112 634 90" width="634" height="90">
      <use href="#books" x="2790" y="2165" width="22" height="22"/>
      <g><path d="M2822 2135h68v37h-68z" fill="#fbfcfb"/><path d="M2822 2136h12v4h-12z" fill="#1d5e45"/><path d="M2822 2140h12v31h-12z" fill="#eaf3ef"/><path d="M2835 2139h8v2h-8z" fill="#1f8a5b"/><path d="M2837 2147h50M2837 2153h50M2837 2159h50M2837 2165h30" stroke="#d5d8d6"/><path d="M2822 2171h68v1.500h-68z" fill="#24343c"/></g>
      <use href="#mongo" x="2866" y="2165" width="22" height="22"/>
      <rect x="2900" y="2128" width="68" height="52" rx="2" fill="#f5f5f5" stroke="#111319" stroke-width="4"/><path d="M2905 2132h34M2907 2135h40M2905 2138h36M2905 2141h40M2905 2145h30" stroke="#aaa" stroke-dasharray="5 3"/><path d="M2903 2148h60M2903 2151h57M2903 2154h60M2903 2157h56M2903 2160h60M2903 2163h58M2903 2166h60M2903 2169h57M2903 2172h60M2903 2175h58" stroke="#8a8a8a" stroke-width="1.500" stroke-dasharray="9 1 5 1"/>
      <rect x="2977" y="2133" width="67" height="42" rx="2" fill="#f7f7f7" stroke="#111319" stroke-width="4"/><path d="M2980 2137h36M2980 2140h50M2980 2143h40M2980 2149h58M2980 2152h56M2980 2155h60M2980 2160h50" stroke="#999" stroke-dasharray="6 2 9 3"/>
      <g><path d="M3052 2134h68v40h-68z" fill="#f7f7f7"/><path d="M3052 2135h24v3h-24z" fill="#e3e3e3"/><path d="M3072 2137h6v2h-6zM3061 2149h6v4h-6z" fill="#4ea76b"/><path d="M3054 2141v30M3058 2141v30" stroke="#d8d8d8" stroke-width="3" stroke-dasharray="1 1"/><path d="M3080 2142l10-5 12-1 8 9 1 6-30 0z" fill="#d3d5d7"/><path d="M3081 2150l20 1 8 1-4 9-3 6-7-2-4 4-7-7z" fill="#7fb2d3"/><path d="M3086 2159l6-2 3 5-5 1zM3098 2156l4-1 1 4-4 2z" fill="#eba04e"/><path d="M3114 2135h5v37h-5z" fill="#e2e2e2"/></g>
      <use href="#tb" x="3096" y="2164" width="23" height="23"/>
      <g><path d="M3130 2134h68v40h-68z" fill="#f7f7f7"/><path d="M3146 2137h6v2h-6zM3145 2150h4v4h-4z" fill="#4ea76b"/><path d="M3132 2141v30M3136 2141v30" stroke="#d8d8d8" stroke-width="3" stroke-dasharray="1 1"/><path d="M3150 2144l12-5 6 6-8 12zM3165 2144l18-4 2 12-12 8z" fill="#dcdedf"/><path d="M3152 2150l6 18M3166 2152l4 16M3176 2146l5 16" stroke="#efc38e" fill="none"/><path d="M3186 2138h12v28h-12z" fill="#ccc"/><path d="M3180 2141h6v2h-6z" fill="#e8894c"/></g>
      <use href="#tb" x="3174" y="2164" width="23" height="23"/>
      <g><path d="M3206 2131h68v46h-68z" fill="#f9f9f9"/><path d="M3208 2136h62v2h-62z" fill="#ddd"/><path d="M3241 2135h8v3h-8z" fill="#4ea76b"/><path d="M3228 2151h6v2h-6z" fill="#4f97ad"/><path d="M3209 2141v34M3213 2141v34" stroke="#cdcdcd" stroke-width="4" stroke-dasharray="1 1"/><path d="M3257 2137h17v34h-17z" fill="#c9c9c9"/><path d="M3238 2144q3 8 3 18" stroke="#e5a55f" fill="none"/><path d="M3242 2160q0-12 4-16" stroke="#8db6d6" fill="none"/></g>
      <use href="#tb" x="3250" y="2164" width="23" height="23"/>
      <path d="M3291 2126q3-4 9-4l6-3 8 2 6-2 8 3q9 1 13 5l-6 8h-38z" fill="#e8e7e6"/><path d="M3296 2127l6-5 5 5-4 6zM3322 2121l9 6-7 6z" fill="#5c6470"/><path d="M3313 2127l5-3 2 6z" fill="#e08b52"/><path d="M3307 2128l4 3-6 3z" fill="#52a9c9"/><path d="M3290 2127q26 14 51 0l-5 50q-1 9-20 9t-20-9z" fill="url(#g-trash)" opacity=".93"/>
      <text x="3350" y="2201" class="filetype">N</text>
    </svg>
  </div>
</footer>
</div>
</body>
</html>
```
FILE: styles.css
```css
* { box-sizing: border-box; }
body { margin: 0; width: 3420px; height: 2214px; overflow: hidden; font: 24px/40px "Open Sans", "Noto Sans", sans-serif; color: #333; background: #2a1a0e; }
ul { list-style: none; margin: 0; padding: 0; }
h1, h2, h3, h4 { margin: 0; }
svg { display: block; flex: none; }
i, em { font-style: normal; }
.defs { position: absolute; }
.desktop { width: 3420px; height: 2214px; display: flex; flex-direction: column; background: linear-gradient(90deg, #dedacd, #a9a69c); }

/* menu bar */
.menubar { height: 76px; flex: none; display: flex; align-items: center; background: linear-gradient(90deg, #f1f0ea, #ebeae4 50%, #e4e1da); font-family: Inter, sans-serif; font-size: 26px; letter-spacing: -0.4px; color: #000; }
.menubar > * { margin-bottom: 3px; }
.apple { margin-left: 45px; }
.menus { display: flex; margin-left: 42px; white-space: nowrap; }
.menus > * { flex: none; }
.m1 { width: 231px; letter-spacing: -0.1px; font-weight: 700; }
.m2 { width: 93px; } .m3 { width: 106px; } .m4 { width: 177px; } .m5 { width: 180px; } .m6 { width: 115px; }
.m7 { width: 147px; } .m8 { width: 102px; } .m9 { width: 134px; } .m10 { width: 539px; } .m11 { width: 146px; } .m12 { width: 60px; }
.extras { display: flex; align-items: center; margin-left: 699px; color: #222; white-space: nowrap; }
.wifi { margin-left: 34px; } .search { margin-left: 39px; } .control { margin-left: 40px; }
.date { margin-left: 35px; width: 154px; } .time { width: 100px; word-spacing: -4px; }

/* window */
.window { height: 2021px; flex: none; display: flex; flex-direction: column; border-radius: 20px 20px 22px 22px; overflow: hidden; background: #f5f5f5; box-shadow: 0 0 0 1px #7d7c74; position: relative; z-index: 1; margin-top: 1px; border-top: 1px solid #fff; }
.titlebar { height: 56px; flex: none; display: flex; align-items: center; padding-left: 16px; gap: 16px; background: #f1f1ef; border-bottom: 2px solid #d2d2d2; }
.light { width: 24px; height: 24px; border-radius: 50%; }
.red { background: #ed6a5e; border: 1px solid #d8584d; } .yellow { background: #f5bf4f; border: 1px solid #dba63c; } .green { background: #61c554; border: 1px solid #4fae43; }
.titlebar h1 { margin-left: 1427px; font: 700 26px/40px Inter, sans-serif; letter-spacing: -0.2px; color: #444; white-space: nowrap; }
.toolbar { height: 80px; flex: none; display: flex; padding-top: 2px; background: #f5f5f5; }
.tg { display: flex; flex: none; height: 78px; background: linear-gradient(#d4d4d4, #d4d4d4) right 4px / 2px 70px no-repeat; }
.g1 { width: 96px; } .g2 { width: 364px; } .g3 { width: 252px; } .g4 { width: 220px; } .g5 { width: 544px; } .g6 { width: 172px; }
.tbox { font: 26px "Liberation Serif", serif; fill: #b4b4b4; text-anchor: middle; }
.combo { width: 196px; height: 46px; margin-top: 14px; border: 2px solid #d4d4d4; border-radius: 3px; display: flex; justify-content: flex-end; align-items: center; padding-right: 10px; }
.combo i { border: 7px solid transparent; border-top: 9px solid #ccc; border-bottom: 0; }
.showme { margin-left: 1572px; display: flex; align-items: center; gap: 10px; color: #111; margin-bottom: 2px; letter-spacing: -0.2px; white-space: nowrap; }

.workspace { height: 1782px; flex: none; display: flex; }
.side { width: 578px; flex: none; background: #fafafa; border-top: 2px solid #d4d4d4; border-right: 2px solid #d4d4d4; display: flex; flex-direction: column; }
.side-tabs { height: 56px; display: flex; }
.side-tabs b { width: 322px; padding: 5px 0 0 35px; color: #222; letter-spacing: -0.6px; }
.tab-layout { flex: 1; display: flex; justify-content: space-between; padding: 6px 14px 0 24px; border-left: 2px solid #d4d4d4; border-bottom: 2px solid #d4d4d4; letter-spacing: -0.2px; }
.tab-layout svg { margin-top: 9px; }
.side h2 { font-size: 24px; line-height: 40px; font-weight: 700; }
.device { height: 196px; padding: 24px 36px 0; border-bottom: 2px solid #d0d0d0; }
.dev { height: 37px; line-height: 34px; padding-left: 25px; letter-spacing: -0.2px; }
.sel { background: #e5e5e5; } .phone { padding-left: 46px; line-height: 36px; }
.preview { display: block; margin: 26px auto 0; width: 260px; height: 46px; padding: 0 2px 4px 0; font: inherit; line-height: 38px; letter-spacing: -0.15px; color: inherit; background: #fdfdfd; border: 2px solid #cacaca; border-radius: 3px; }
.size { height: 147px; padding: 10px 36px 0; border-bottom: 2px solid #d0d0d0; }
.select { margin-top: 10px; height: 43px; border-bottom: 2px solid #cacaca; padding-left: 2px; display: flex; justify-content: space-between; align-items: center; }
.select span { margin-bottom: 2px; letter-spacing: 0.7px; }
.select i { border: 7px solid transparent; border-top: 7px solid #666; border-bottom: 0; }
.sheets { height: 794px; padding: 9px 36px 0; }
.sheets ul { margin-top: 19px; }
.sheets li { height: 40px; line-height: 40px; display: flex; white-space: pre; }
.si { width: 26px; height: 26px; margin: 7px 21px 0 3px; }
.used { width: 32px; height: 32px; margin-right: 15px; }
.sheets .num { letter-spacing: 0.25px; }
.sheets .tight { letter-spacing: -0.32px; }
.objects { border-top: 2px solid #d0d0d0; padding: 4px 24px 0; }
.obj-body { display: flex; justify-content: space-between; padding-right: 4px; height: 424px; }
.obj-body ul { margin-top: 20px; }
.obj-body li { height: 40px; line-height: 40px; display: flex; letter-spacing: -0.25px; }
.obj-body li svg { width: 24px; height: 24px; margin: 8px 14px 0 8px; fill: none; stroke: #666; stroke-width: 2; }
.scroll { width: 14px; height: 308px; margin-top: 12px; border-radius: 7px; background: #7f7f7f; }
.toggle { display: flex; height: 48px; margin-top: 4px; line-height: 45px; text-align: center; }
.toggle b { width: 265px; background: #05628c; color: #fff; border-radius: 4px 0 0 4px; line-height: 47px; }
.toggle span { flex: 1; border: 2px solid #222; border-radius: 0 4px 4px 0; background: #fff; }
.check { display: flex; align-items: center; height: 40px; margin: 12px 0 0 12px; letter-spacing: -0.35px; }
.check i { width: 28px; height: 28px; border: 2px solid #222; border-radius: 2px; background: #fff; margin-right: 13px; }

.stage { width: 2202px; flex: none; background: #f5f5f5; }
.canvas { width: 1300px; height: 1720px; background: #fff; display: flex; }
.viz { width: 972px; flex: none; }
.viz-title { font-weight: 300; font-size: 48px; line-height: 64px; margin: 26px 0 0 28px; white-space: nowrap; letter-spacing: 1.4px; -webkit-text-stroke: 0.6px #333; }
.viz-sub { font-weight: 300; font-size: 40px; line-height: 56px; margin: 39px 0 0 73px; white-space: nowrap; letter-spacing: 1.3px; -webkit-text-stroke: 0.6px #333; }
.chart1 { margin: 11px 0 0 62px; }
.selected { width: 865px; height: 691px; margin: 218px 0 0 62px; border: 4px solid #c3c3c3; border-radius: 3px; }
text { font-family: "Open Sans", sans-serif; font-size: 24px; }
.head { font-weight: 600; fill: #59a14f; text-anchor: middle; }
.ytitle { fill: #499894; font-weight: 600; }
.ticks text { fill: #499894; text-anchor: end; }
.xl text { fill: #59a14f; fill-opacity: 0.9; }
.legends { flex: none; width: 328px; }
.legend h4 { font-weight: 600; line-height: 42px; height: 40px; white-space: nowrap; }
.l1 { margin-top: 104px; } .l2 { margin-top: 364px; }
.l2 h4 { letter-spacing: -0.15px; }
.legend ul { margin-left: 6px; }
.legend li { height: 40px; line-height: 41px; display: flex; align-items: center; white-space: nowrap; letter-spacing: 0.1px; }
.legend .even { letter-spacing: 0; }
.legend .wide { letter-spacing: 0.35px; }
.legend li i { width: 28px; height: 28px; margin: 0 10px 0 0; }
.tan { background: #d7b5a6; } .blue { background: #4e79a7; } .olive { background: #b6992d; } .grn { background: #59a14f; }
.brown { background: #9c755f; } .orange { background: #f28e2b; } .salmon { background: #ff9d9a; } .gray { background: #79706e; }
.sky { background: #a0cbe8; } .coral { background: #e15759; } .teal { background: #76b7b2; } .gold { background: #edc948; }
.plum { background: #b07aa1; } .rose { background: #ff9da7; } .stone { background: #bab0ac; }

.showpanel { flex: 1; background: #d4d4d4; border-left: 2px solid #d4d4d4; border-top: 2px solid #d4d4d4; }
.sp-head { height: 50px; background: #fafafa; display: flex; justify-content: flex-end; align-items: center; padding-right: 13px; }

/* sheet tabs */
.tabs { height: 62px; flex: none; display: flex; background: linear-gradient(#e6e6e6, #e1e1e1); border-top: 2px solid #c9c9c9; border-bottom: 2px solid #cdcdcd; color: #555; }
.tabs > span { flex: none; border-right: 2px solid #c4c4c4; display: flex; align-items: center; white-space: nowrap; }
.tabs .tight { letter-spacing: -0.33px; }
.ti { width: 24px; height: 24px; margin-right: 9px; }
.t1 { width: 262px; padding-left: 19px; gap: 11px; } .t2 { width: 213px; padding-left: 7px; letter-spacing: 0.15px; } .t3 { width: 332px; padding-left: 14px; }
.t4 { width: 192px; padding-left: 11px; } .t5 { width: 333px; padding-left: 11px; } .t6 { width: 401px; padding-left: 12px; }
.t7 { width: 316px; padding-left: 11px; } .t8 { width: 266px; padding-left: 12px; } .t9 { width: 204px; padding-left: 11px; }
.t10 { width: 208px; padding-left: 15px; letter-spacing: -0.2px; } .t11 { width: 146px; padding-left: 14px; } .t12 { width: 145px; padding-left: 14px; }
.t13 { width: 210px; padding-left: 15px; } .t14 { width: 63px; padding-left: 15px; } .t15 { width: 64px; padding-left: 16px; } .t16 { flex: 1; padding-left: 16px; }
.t11, .t12 { letter-spacing: 0.2px; }
.on { background: #fafafa; font-weight: 700; color: #4a4a4a; letter-spacing: -0.3px; }
.status { height: 40px; flex: none; display: flex; justify-content: flex-end; background: linear-gradient(#e4e4e4, #d5d5d5); }
.status i { border-left: 2px solid #c2c2c2; }
.s0 { width: 254px; } .s1, .s2 { width: 54px; } .s3 { width: 94px; } .s4 { width: 2px; }
.nav { width: 142px; border-right: 2px solid #c2c2c2; }

/* desktop and dock */
.ground { height: 116px; flex: none; position: relative; background: #24160d; }
.soil { position: absolute; left: 0; top: -24px; }
.file { position: absolute; left: 3284px; top: -8px; }
.filetype { font: 600 16px Inter, sans-serif; fill: #777; }
.dock { position: absolute; left: 58px; top: 12px; width: 3303px; height: 94px; padding-left: 3px; border: 2px solid rgba(255,255,255,.17); border-radius: 26px; background: linear-gradient(90deg, #877558, #836c55 16%, #89734f 28%, #8b7154 48%, #796b57 65%, #796b57 93%, rgba(170,160,148,.95) 98%, rgba(190,188,184,.9)); display: flex; }
.slot { width: 76.77px; flex: none; position: relative; display: flex; flex-direction: column; align-items: center; padding-top: 13px; }
.slot svg { width: 58px; height: 58px; overflow: visible; }
.slot.run::after { content: ""; width: 8px; height: 8px; border-radius: 50%; background: #140c06; margin-top: 9px; }
.slot.tab { padding-top: 11px; }
.slot.tab svg { width: 62px; height: 62px; }
.tab.run::after { margin-top: 7px; }
.badge { position: absolute; left: 48px; top: 5px; width: 28px; height: 28px; border-radius: 50%; background: #e5493d; color: #fff; font: 17px/28px Inter, sans-serif; text-align: center; }
.dsep { width: 2px; height: 70px; margin-top: 10px; background: rgba(40,28,18,.55); flex: none; }
.first { margin-left: 17px; margin-right: 15px; }
.second { margin-left: 16px; margin-right: 18px; }
.thumbs { overflow: visible; }
.app { font: 700 19px Inter, sans-serif; fill: #fff; text-anchor: middle; }
.mon { font: 600 11px Inter, sans-serif; fill: #fff; text-anchor: middle; }
.day { font: 300 34px Inter, sans-serif; fill: #222; text-anchor: middle; letter-spacing: -1px; }
.aa { font: 30px "Liberation Serif", serif; fill: #fff; text-anchor: middle; }
```
